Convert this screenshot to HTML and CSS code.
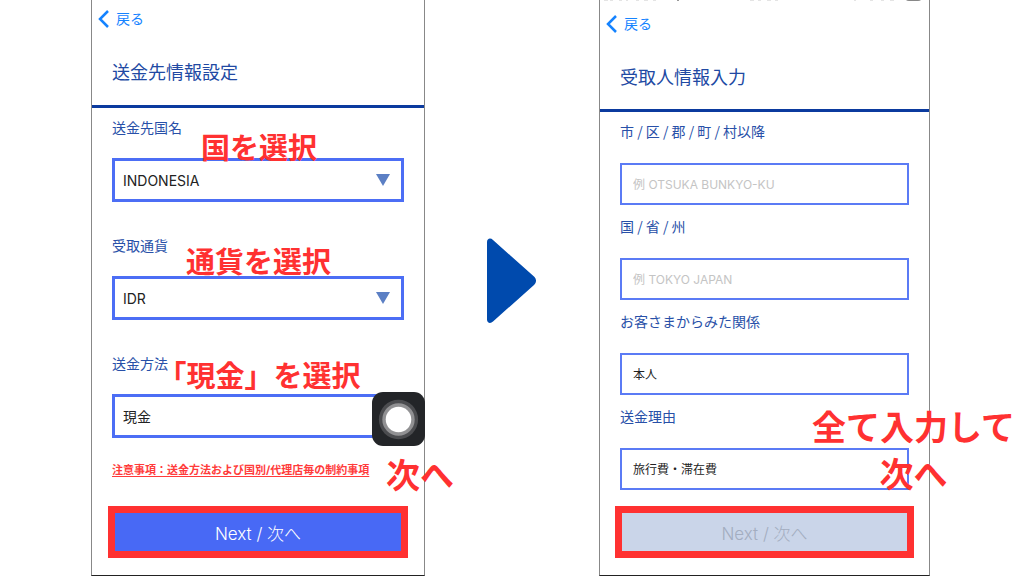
FILE: index.html
```html
<!DOCTYPE html>
<html lang="ja">
<head>
<meta charset="utf-8">
<meta name="viewport" content="width=device-width, initial-scale=1">
<title>送金手続きガイド</title>
<link rel="stylesheet" href="styles.css">
</head>
<body>
<main class="guide">
  <section class="phone phone-left">
    <header class="head">
      <a class="back" href="#"><svg class="chevron" viewBox="0 0 11 18" aria-hidden="true"><path d="M10 1L2 9l8 8"/></svg>戻る</a>
      <h1 class="title">送金先情報設定</h1>
    </header>
    <form class="form">
      <div class="field">
        <label for="country">送金先国名</label>
        <select id="country" class="box"><option>INDONESIA</option></select>
        <svg class="caret" viewBox="0 0 14 12" aria-hidden="true"><path d="M0 0h14L7 12z"/></svg>
        <p class="note note-country">国を選択</p>
      </div>
      <div class="field">
        <label for="currency">受取通貨</label>
        <select id="currency" class="box"><option>IDR</option></select>
        <svg class="caret" viewBox="0 0 14 12" aria-hidden="true"><path d="M0 0h14L7 12z"/></svg>
        <p class="note note-currency">通貨を選択</p>
      </div>
      <div class="field">
        <label for="method">送金方法</label>
        <select id="method" class="box"><option>現金</option></select>
        <button class="assist" type="button" aria-label="AssistiveTouch"><svg viewBox="0 0 54 54" aria-hidden="true"><circle cx="27" cy="27" r="20" fill="#4b4c4f"/><circle cx="27" cy="27" r="16.500" fill="#919193"/><circle cx="27" cy="27" r="13" fill="#fff"/></svg></button>
        <p class="note note-method"><span class="bracket">「</span>現金」を選択</p>
      </div>
      <div class="caution">
        <a href="#">注意事項：送金方法および国別/代理店毎の制約事項</a>
        <p class="note note-large note-next">次へ</p>
      </div>
      <button class="next" type="button">Next / 次へ</button>
    </form>
  </section>

  <svg class="arrow" viewBox="0 0 50 86" aria-hidden="true"><path d="M0 4C0 .5 3.500-.5 6 2L47 38.500c2.700 2.500 2.700 6 0 8.500L6 83.500C3.500 86 0 85 0 81.500z"/></svg>

  <section class="phone phone-right">
    <svg class="status" viewBox="0 0 320 2" aria-hidden="true"><path d="M0 .5h4m2 0h3m6 0h3m4 0h2m8 0h3m5 0h4m5 0h3M146 .5h4m4 0h3m6 0h4m4 0h3M250 .5h2m14 0h3m8 0h3m6 0h4" stroke="#e4e4e4"/><path d="M73 0h2v1h-2z" fill="#999"/><path d="M302 0h15q-1 1-3 1h-9q-2 0-3-1" fill="#888"/></svg>
    <header class="head">
      <a class="back" href="#"><svg class="chevron" viewBox="0 0 11 18" aria-hidden="true"><path d="M10 1L2 9l8 8"/></svg>戻る</a>
      <h1 class="title">受取人情報入力</h1>
    </header>
    <form class="form">
      <div class="field">
        <label for="city">市 / 区 / 郡 / 町 / 村以降</label>
        <input id="city" class="box" type="text" placeholder="例 OTSUKA BUNKYO-KU">
      </div>
      <div class="field">
        <label for="state">国 / 省 / 州</label>
        <input id="state" class="box" type="text" placeholder="例 TOKYO JAPAN">
      </div>
      <div class="field">
        <label for="relation">お客さまからみた関係</label>
        <select id="relation" class="box"><option>本人</option></select>
      </div>
      <div class="field">
        <label for="reason">送金理由</label>
        <select id="reason" class="box"><option>旅行費・滞在費</option></select>
        <p class="note note-large note-all">全て入力して<br>次へ</p>
      </div>
      <button class="next" type="button" disabled>Next / 次へ</button>
    </form>
  </section>
</main>
</body>
</html>
```
FILE: styles.css
```css
* {
  box-sizing: border-box;
}

body {
  margin: 0;
  background: #fff;
  font-family: Inter, "Noto Sans CJK JP", sans-serif;
  font-size: 14px;
}

h1,
p {
  margin: 0;
}

.guide {
  display: grid;
  grid-template-columns: 334fr 174px 331fr;
  padding: 0 94px 0 91px;
}

.phone {
  display: flex;
  flex-direction: column;
  border: 1px solid #888;
  border-top: 0;
  border-bottom-color: #222;
}

.arrow {
  width: 50px;
  height: 86px;
  align-self: center;
  justify-self: center;
  margin: 0 0 14px;
  fill: #004aad;
}

.head {
  display: flex;
  flex-direction: column;
  align-items: flex-start;
  gap: 30px;
  padding: 9px 20px 18px 6px;
  border-bottom: 3px solid #0b3a9e;
}

.phone-right .head {
  padding-top: 12px;
  padding-bottom: 17px;
}

.status {
  display: block;
  height: 2px;
  width: 320px;
  margin-left: 4px;
}

.back {
  display: flex;
  align-items: center;
  gap: 7px;
  line-height: 20px;
  color: #1583ff;
  text-decoration: none;
}

.chevron {
  width: 11px;
  height: 18px;
  fill: none;
  stroke: #1583ff;
  stroke-width: 2.5;
}

.title {
  padding-left: 14px;
  font-size: 18px;
  font-weight: 400;
  line-height: 28px;
  color: #2149a3;
}

.form {
  display: flex;
  flex-direction: column;
  padding: 9px 20px 17px;
}

.phone-right .form {
  padding-top: 9px;
}

.field {
  position: relative;
  display: flex;
  flex-direction: column;
  gap: 21px;
  margin-bottom: 33px;
}

.phone-right .field {
  gap: 22px;
  margin-bottom: 11px;
}

.field label {
  font-family: "Noto Sans CJK JP", sans-serif;
  line-height: 20px;
  color: #2850a8;
}

.box {
  appearance: none;
  width: 100%;
  height: 44px;
  padding: 0 8px;
  border: 3px solid #4c6ef5;
  border-radius: 0;
  background: #fff;
  color: #222;
  font: inherit;
}

.phone-right .box {
  height: 42px;
  padding: 0 11px;
  border-width: 2px;
  border-color: #5b7bf5;
  font-size: 12px;
}

.box::placeholder {
  color: #c4c4c4;
  opacity: 1;
}

.caret {
  position: absolute;
  right: 14px;
  bottom: 16px;
  width: 14px;
  height: 12px;
  fill: #5b7fc4;
  pointer-events: none;
}

.assist {
  position: absolute;
  right: -21px;
  bottom: -8px;
  width: 53px;
  height: 54px;
  padding: 0;
  border: 0;
  border-radius: 11px;
  background: #232528;
}

.assist svg {
  display: block;
  width: 100%;
}

.caution {
  position: relative;
  margin-top: -11px;
  font-size: 11px;
  line-height: 20px;
}

.caution a {
  color: #ff3b3b;
  font-weight: 700;
  text-underline-offset: 2px;
  white-space: nowrap;
}

.note {
  position: absolute;
  color: #ff3131;
  font-family: "Noto Sans CJK JP", sans-serif;
  font-size: 29px;
  font-weight: 700;
  line-height: 40px;
  white-space: nowrap;
  pointer-events: none;
}

.note-large {
  font-size: 34px;
  line-height: 47px;
  text-align: center;
}

.note-country {
  left: 89px;
  top: 9px;
}

.note-currency {
  left: 74px;
  top: 5px;
}

.note-method {
  left: 60px;
  top: 1px;
}

.bracket {
  font-feature-settings: "halt";
}

.note-next {
  left: 274px;
  top: -10px;
}

.note-all {
  left: 192px;
  top: -4px;
}

.next {
  height: 52px;
  margin: 26px -4px 0;
  padding: 0;
  border: 7px solid #ff3131;
  background: #4869f5;
  color: #fff;
  font: inherit;
  font-size: 17px;
  font-weight: 300;
}

.phone-right .next {
  margin: 5px -5px 0;
  background: #cad5e9;
  color: #a3adc0;
}
```
